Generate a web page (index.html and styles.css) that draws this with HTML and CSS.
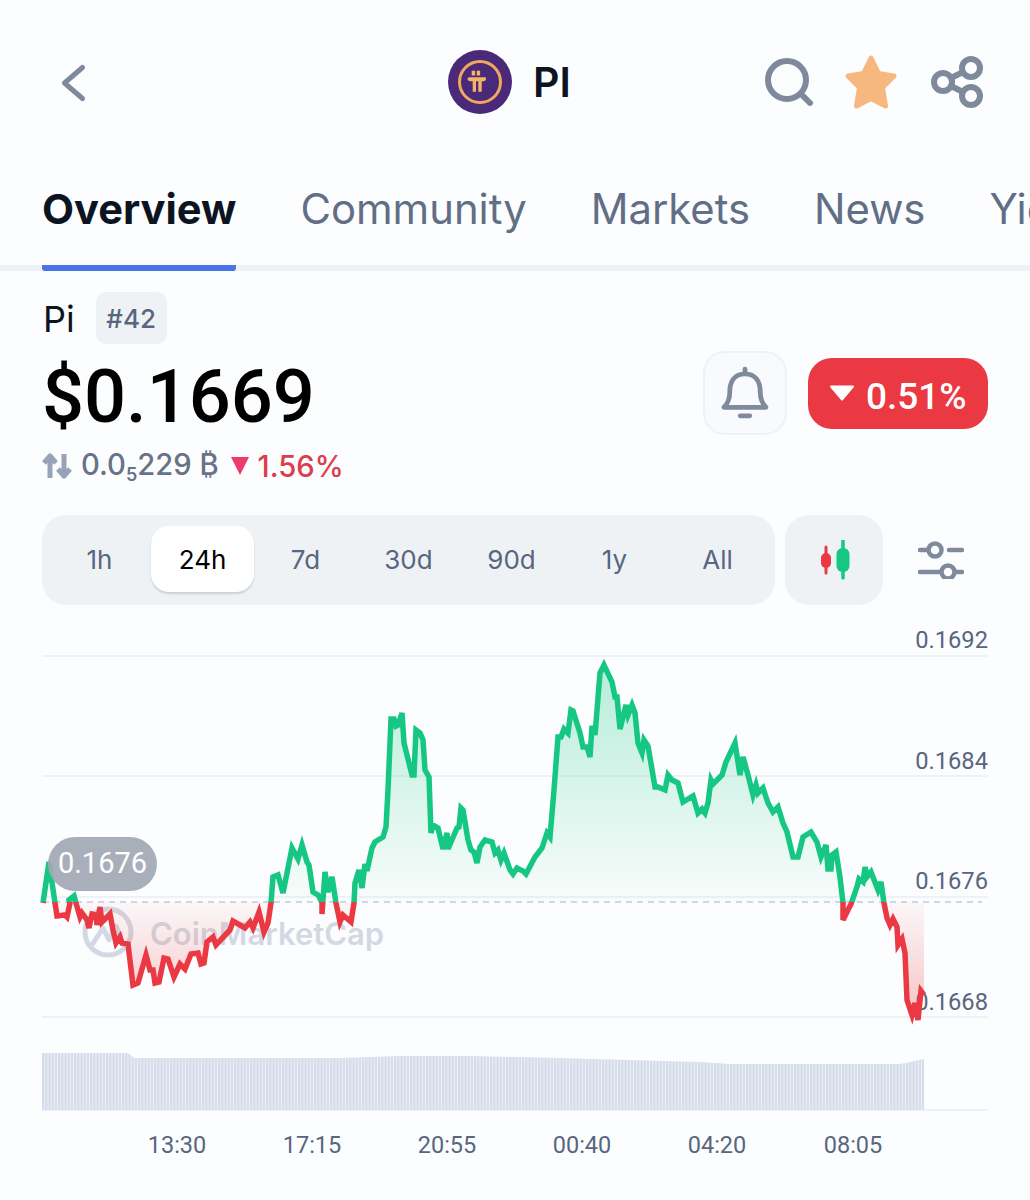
FILE: index.html
```html
<!DOCTYPE html>
<html lang="en">
<head>
<meta charset="utf-8">
<title>PI</title>
<link rel="stylesheet" href="styles.css">
</head>
<body>
<header class="topbar">
  <svg class="icon-back" viewBox="0 0 30 44" aria-hidden="true"><polyline points="22.500,7.500 4.500,23 22.500,38.500"/></svg>
  <div class="coin">
    <svg class="coin-logo" viewBox="0 0 64 64" aria-hidden="true">
      <circle class="logo-bg" cx="32" cy="32" r="32"/>
      <circle class="logo-ring" cx="32" cy="32" r="20.500"/>
      <path class="logo-pi" d="M19.500 29c0-1.200 1-1.700 2-1.700H37c1 0 1 .8 1 1.500 0 1.600-1 2.500-2.300 2.500h-2v10.400h-3.400V31.300h-2.300v10.400h-3.300V31.300h-1.400c-2 0-3.800-.6-3.800-2.300z"/>
      <rect class="logo-pi" x="23.700" y="20.700" width="3.400" height="4.800"/>
      <rect class="logo-pi" x="28.700" y="20.700" width="3.400" height="4.800"/>
    </svg>
    <span class="coin-name">PI</span>
  </div>
  <div class="actions">
    <svg class="icon-search" viewBox="0 0 50 50" aria-hidden="true"><circle cx="22" cy="23" r="19"/><line x1="36" y1="37" x2="45" y2="46"/></svg>
    <svg class="icon-star" viewBox="0 0 54 56" aria-hidden="true"><path d="M27 4l7.500 15.500 15.500 2.500-11.500 11.500 3 18.500-14.500-7.500-14.500 7.500 3-18.500L4 22l15.500-2.500z"/></svg>
    <svg class="icon-share" viewBox="0 0 54 54" aria-hidden="true"><circle cx="41" cy="13" r="9"/><circle cx="13" cy="27" r="9"/><circle cx="41" cy="41" r="9"/><line x1="21" y1="23" x2="33" y2="17"/><line x1="21" y1="31" x2="33" y2="37"/></svg>
  </div>
</header>

<nav class="tabs">
  <a class="tab tab-active">Overview</a>
  <a class="tab">Community</a>
  <a class="tab">Markets</a>
  <a class="tab">News</a>
  <a class="tab">Yield</a>
</nav>

<main class="content">
  <div class="name-row">
    <span class="name">Pi</span>
    <span class="rank">#42</span>
  </div>
  <div class="price-row">
    <span class="price">$0.1669</span>
    <div class="price-side">
      <button class="bell" type="button">
        <svg class="icon-bell" viewBox="0 0 84 84" aria-hidden="true">
          <path d="M42 22C31 22 26 30 26 41c0 8-2 12-6 16h44c-4-4-6-8-6-16 0-11-5-19-16-19z"/>
          <line x1="42" y1="17" x2="42" y2="21"/>
          <line x1="37" y1="66" x2="47" y2="66"/>
        </svg>
      </button>
      <div class="change">
        <svg class="tri-white" viewBox="0 0 26 16" aria-hidden="true"><path d="M2 1.500h22L13 14.500z"/></svg>
        <span class="change-value">0.51%</span>
      </div>
    </div>
  </div>
  <div class="btc-row">
    <svg class="icon-swap" viewBox="0 0 30 28" aria-hidden="true"><path d="M8 26V5M2 11l6-7 6 7M22 2v21M16 17l6 7 6-7"/></svg>
    <span class="btc">0.0<span class="btc-sub">5</span>229 ₿</span>
    <svg class="tri-pink" viewBox="0 0 20 20" aria-hidden="true"><path d="M1 1h18L10 19z"/></svg>
    <span class="btc-change">1.56%</span>
  </div>

  <div class="tools">
    <div class="ranges">
      <span class="range">1h</span>
      <span class="range range-active">24h</span>
      <span class="range">7d</span>
      <span class="range">30d</span>
      <span class="range">90d</span>
      <span class="range">1y</span>
      <span class="range">All</span>
    </div>
    <div class="candle-btn">
      <svg class="icon-candle" viewBox="0 0 34 40" aria-hidden="true">
        <line class="c-red" x1="6" y1="7" x2="6" y2="33"/><rect class="c-red-fill" x="1" y="13" width="10" height="15" rx="5"/>
        <line class="c-green" x1="23" y1="1" x2="23" y2="38"/><rect class="c-green-fill" x="16.500" y="8" width="13" height="24" rx="6"/>
      </svg>
    </div>
    <svg class="icon-filter" viewBox="0 0 46 40" aria-hidden="true">
      <line x1="2" y1="11" x2="8" y2="11"/><circle cx="17" cy="11" r="6.500"/><line x1="31" y1="11" x2="44" y2="11"/>
      <line x1="2" y1="33" x2="21" y2="33"/><circle cx="30" cy="33" r="6.500"/><line x1="38" y1="33" x2="44" y2="33"/>
    </svg>
  </div>

  <svg class="chart" viewBox="0 625 1030 545" role="img" aria-label="Price chart">
    <defs>
      <linearGradient id="grad-up" gradientUnits="userSpaceOnUse" x1="0" y1="665" x2="0" y2="902">
        <stop offset="0" stop-color="#16c784" stop-opacity=".3"/>
        <stop offset="1" stop-color="#16c784" stop-opacity=".02"/>
      </linearGradient>
      <linearGradient id="grad-down" gradientUnits="userSpaceOnUse" x1="0" y1="902" x2="0" y2="1020">
        <stop offset="0" stop-color="#ea3943" stop-opacity=".03"/>
        <stop offset="1" stop-color="#ea3943" stop-opacity=".3"/>
      </linearGradient>
      <clipPath id="clip-up"><rect x="0" y="600" width="1030" height="302"/></clipPath>
      <clipPath id="clip-down"><rect x="0" y="902" width="1030" height="200"/></clipPath>
      <pattern id="vol-bars" patternUnits="userSpaceOnUse" width="3.200" height="10" x="42">
        <rect class="vol-gap" width="3.200" height="10"/>
        <rect class="vol-bar" width="2.300" height="10"/>
      </pattern>
      <path id="price-line" d="M43,903L49,862L55,903L57,916L65,915L67,917L70,903L69,900L74,896L76,903L80,917L82,913L87,920L89,928L92,914L96,915L97,925L100,907L102,922L110,914L113,930L116,943L120,937L122,943L128,944L133,985L138,983L146,955L150,970L153,970L155,983L159,982L164,958L168,959L174,977L180,964L185,969L191,954L198,953L201,964L204,963L207,942L213,937L216,945L230,930L233,921L245,928L250,922L253,928L259,912L264,932L268,923L271,903L273,877L278,875L283,893L292,848L298,859L302,845L307,862L309,865L313,892L318,895L322,902L322,914L325,872L328,892L332,877L336,903L340,922L343,915L351,922L354,903L355,883L359,870L362,888L365,864L367,871L372,848L375,842L383,837L386,827L388,790L391,719L394,719L396,726L398,725L402,713L404,743L412,775L414,775L416,730L420,733L423,740L425,770L429,777L431,833L433,825L438,828L443,849L447,833L448,849L457,828L459,827L461,808L463,810L468,840L471,850L474,852L477,863L480,847L485,840L492,842L495,853L498,850L501,860L504,853L510,870L513,874L517,868L523,871L526,874L535,857L542,848L547,833L550,837L554,790L558,737L561,737L564,729L568,733L571,710L573,711L580,733L583,747L587,747L590,757L592,726L595,735L600,673L604,665L612,682L615,697L617,697L620,729L626,705L628,715L632,705L635,713L638,743L642,753L644,740L648,746L655,787L658,787L665,790L668,775L672,780L678,783L683,802L693,796L698,813L702,809L705,813L708,803L711,780L713,784L722,775L726,762L735,743L740,775L743,757L748,775L753,795L756,785L758,793L763,788L768,803L773,812L778,807L783,823L787,832L793,857L798,857L803,837L811,832L817,842L821,857L826,845L828,869L831,869L832,855L836,852L840,877L843,903L843,920L851,904L857,887L859,879L863,882L865,867L867,877L871,872L878,890L881,882L884,903L887,918L890,925L893,919L897,927L898,945L902,939L905,953L907,1000L912,1015L915,1003L918,1020L921,991L924,995"/>
      <path id="price-area" d="M43,903L49,862L55,903L57,916L65,915L67,917L70,903L69,900L74,896L76,903L80,917L82,913L87,920L89,928L92,914L96,915L97,925L100,907L102,922L110,914L113,930L116,943L120,937L122,943L128,944L133,985L138,983L146,955L150,970L153,970L155,983L159,982L164,958L168,959L174,977L180,964L185,969L191,954L198,953L201,964L204,963L207,942L213,937L216,945L230,930L233,921L245,928L250,922L253,928L259,912L264,932L268,923L271,903L273,877L278,875L283,893L292,848L298,859L302,845L307,862L309,865L313,892L318,895L322,902L322,914L325,872L328,892L332,877L336,903L340,922L343,915L351,922L354,903L355,883L359,870L362,888L365,864L367,871L372,848L375,842L383,837L386,827L388,790L391,719L394,719L396,726L398,725L402,713L404,743L412,775L414,775L416,730L420,733L423,740L425,770L429,777L431,833L433,825L438,828L443,849L447,833L448,849L457,828L459,827L461,808L463,810L468,840L471,850L474,852L477,863L480,847L485,840L492,842L495,853L498,850L501,860L504,853L510,870L513,874L517,868L523,871L526,874L535,857L542,848L547,833L550,837L554,790L558,737L561,737L564,729L568,733L571,710L573,711L580,733L583,747L587,747L590,757L592,726L595,735L600,673L604,665L612,682L615,697L617,697L620,729L626,705L628,715L632,705L635,713L638,743L642,753L644,740L648,746L655,787L658,787L665,790L668,775L672,780L678,783L683,802L693,796L698,813L702,809L705,813L708,803L711,780L713,784L722,775L726,762L735,743L740,775L743,757L748,775L753,795L756,785L758,793L763,788L768,803L773,812L778,807L783,823L787,832L793,857L798,857L803,837L811,832L817,842L821,857L826,845L828,869L831,869L832,855L836,852L840,877L843,903L843,920L851,904L857,887L859,879L863,882L865,867L867,877L871,872L878,890L881,882L884,903L887,918L890,925L893,919L897,927L898,945L902,939L905,953L907,1000L912,1015L915,1003L918,1020L921,991L924,995L924,902L43,902Z"/>
    </defs>

    <line class="grid" x1="42" y1="656" x2="988" y2="656"/>
    <line class="grid" x1="42" y1="776" x2="988" y2="776"/>
    <line class="grid" x1="42" y1="897" x2="988" y2="897"/>
    <line class="grid" x1="42" y1="1017" x2="988" y2="1017"/>
    <line class="grid" x1="42" y1="1110" x2="988" y2="1110"/>

    <g class="watermark">
      <circle class="wm-ring" cx="108" cy="932" r="23"/>
      <path class="wm-mark" d="M92 945l11-17 6 12 7-14 5 12"/>
      <text class="wm-text" x="150" y="945">CoinMarketCap</text>
    </g>

    <use href="#price-area" class="area-up" clip-path="url(#clip-up)"/>
    <use href="#price-area" class="area-down" clip-path="url(#clip-down)"/>
    <line class="base" x1="43" y1="902" x2="982" y2="902"/>

    <text class="y-label" x="988" y="648">0.1692</text>
    <text class="y-label" x="988" y="769">0.1684</text>
    <text class="y-label" x="988" y="889">0.1676</text>
    <text class="y-label" x="988" y="1010">0.1668</text>

    <use href="#price-line" class="line-up" clip-path="url(#clip-up)"/>
    <use href="#price-line" class="line-down" clip-path="url(#clip-down)"/>

    <rect class="bubble" x="48" y="837" width="109" height="54" rx="27"/>
    <text class="bubble-text" x="102.500" y="873">0.1676</text>

    <path fill="url(#vol-bars)" d="M42 1053H128L134 1058H340L400 1056H470L560 1058L700 1062L730 1064H900L924 1059V1110H42Z"/>

    <text class="x-label" x="177" y="1153">13:30</text>
    <text class="x-label" x="312" y="1153">17:15</text>
    <text class="x-label" x="447" y="1153">20:55</text>
    <text class="x-label" x="582" y="1153">00:40</text>
    <text class="x-label" x="717" y="1153">04:20</text>
    <text class="x-label" x="853" y="1153">08:05</text>
  </svg>
</main>
</body>
</html>
```
FILE: styles.css
```css
* { box-sizing: border-box; }
html, body { margin: 0; height: 1200px; overflow: hidden; }
body {
  background: #fcfdfe;
  font-family: Inter, "Noto Sans", sans-serif;
  color: #0d1421;
}

/* top bar */
.topbar {
  display: grid;
  grid-template-columns: 388px auto 1fr;
  align-items: center;
  height: 64px;
  margin-top: 50px;
  padding: 0 46px 0 60px;
}
.icon-back { width: 30px; height: 44px; }
.icon-back polyline { fill: none; stroke: #7e8a9c; stroke-width: 5; stroke-linecap: round; stroke-linejoin: round; }
.coin { display: flex; align-items: center; gap: 21px; }
.coin-logo { width: 64px; height: 64px; }
.logo-bg { fill: #4a2a78; }
.logo-ring { fill: none; stroke: #efa95f; stroke-width: 3; }
.logo-pi { fill: #f4b368; }
.coin-name { font-size: 41px; font-weight: 600; }
.actions { display: flex; align-items: center; justify-content: flex-end; gap: 29px; }
.icon-search { width: 50px; height: 50px; }
.icon-search circle, .icon-search line { fill: none; stroke: #7e8a9c; stroke-width: 6; stroke-linecap: round; }
.icon-star { width: 54px; height: 56px; }
.icon-star path { fill: #f6b87e; stroke: #f6b87e; stroke-width: 5; stroke-linejoin: round; }
.icon-share { width: 54px; height: 54px; margin-left: 3px; }
.icon-share circle, .icon-share line { fill: none; stroke: #7e8a9c; stroke-width: 6; }

/* tabs */
.tabs {
  display: flex;
  gap: 64px;
  margin-top: 64px;
  height: 93px;
  padding-left: 42px;
  border-bottom: 6px solid #eff2f5;
  white-space: nowrap;
}
.tab {
  flex: none;
  height: 93px;
  padding-top: 1px;
  line-height: 60px;
  font-size: 41.800px;
  color: #616e85;
}
.tab:last-child { flex: 0 1 auto; min-width: 0; overflow: hidden; }
.tab-active {
  color: #0d1421;
  font-size: 41.600px;
  font-weight: 700;
  border-bottom: 6px solid #4a74e8;
  border-radius: 0 0 3px 3px;
}

/* summary */
.content { padding: 21px 42px 0; }
.name-row { display: flex; align-items: center; gap: 21px; height: 52px; }
.name { font-size: 36px; padding-left: 1px; padding-top: 2px; }
.rank {
  display: flex;
  align-items: center;
  justify-content: center;
  width: 71px;
  height: 52px;
  border-radius: 10px;
  background: #eff2f5;
  color: #58667e;
  font-size: 26px;
  font-weight: 500;
}
.price-row { display: flex; align-items: center; justify-content: space-between; height: 84px; margin-top: 7px; }
.price { font-family: Roboto, sans-serif; font-size: 74px; font-weight: 500; color: #000; padding-top: 7px; }
.price-side { display: flex; align-items: center; gap: 21px; }
.bell { width: 84px; height: 84px; padding: 0; background: #f9fafd; border: 2px solid #eff2f5; border-radius: 22px; }
.icon-bell { display: block; width: 80px; height: 80px; }
.icon-bell path, .icon-bell line { fill: none; stroke: #808a9d; stroke-width: 5; stroke-linecap: round; stroke-linejoin: round; }
.change {
  display: flex;
  align-items: center;
  gap: 11px;
  width: 180px;
  height: 71px;
  padding-left: 21px;
  border-radius: 24px;
  background: #ea3943;
  color: #fff;
  font-family: Roboto, sans-serif;
  font-size: 37px;
  font-weight: 500;
}
.change-value { padding-top: 6px; }
.tri-white { width: 26px; height: 16px; }
.tri-white path { fill: #fff; stroke: #fff; stroke-width: 2; stroke-linejoin: round; }
.btc-row { display: flex; align-items: center; height: 36px; margin-top: 13px; font-size: 29.200px; font-weight: 500; }
.icon-swap { width: 30px; height: 28px; }
.icon-swap path { fill: none; stroke: #97a3b6; stroke-width: 5; stroke-linejoin: round; }
.btc { margin-left: 9px; color: #667388; }
.btc-sub { font-size: 18px; font-weight: 600; vertical-align: -6px; }
.tri-pink { width: 20px; height: 20px; margin-left: 11px; }
.tri-pink path { fill: #ee3a6a; }
.btc-change { margin-left: 8px; color: #dc3c4c; }

/* range selector */
.tools { display: flex; align-items: center; margin-top: 31px; }
.ranges {
  display: flex;
  align-items: center;
  width: 733px;
  height: 90px;
  padding: 0 6px 2px;
  border-radius: 24px;
  background: #eff2f5;
}
.range {
  flex: 1;
  height: 66px;
  line-height: 68px;
  text-align: center;
  font-size: 26px;
  color: #58667e;
}
.range-active {
  background: #fff;
  border-radius: 18px;
  color: #000;
  box-shadow: 0 2px 2px rgba(88, 102, 126, .25);
}
.candle-btn {
  display: flex;
  align-items: center;
  justify-content: center;
  width: 98px;
  height: 90px;
  margin-left: 10px;
  padding-left: 6px;
  border-radius: 24px;
  background: #eff2f5;
}
.icon-candle { width: 34px; height: 40px; }
.c-red { stroke: #ea3943; stroke-width: 3; stroke-linecap: round; }
.c-red-fill { fill: #ea3943; }
.c-green { stroke: #16c784; stroke-width: 3.500; stroke-linecap: round; }
.c-green-fill { fill: #16c784; }
.icon-filter { width: 46px; height: 40px; margin: -2px 0 0 35px; }
.icon-filter line, .icon-filter circle { fill: none; stroke: #808a9d; stroke-width: 4.500; stroke-linecap: round; }

/* chart */
.chart { display: block; width: 1030px; height: 545px; margin: 20px 0 0 -42px; }
.grid { stroke: #eff2f5; stroke-width: 2; }
.base { stroke: #cfd6e4; stroke-width: 2; stroke-dasharray: 6 5; }
.area-up { fill: url(#grad-up); }
.area-down { fill: url(#grad-down); }
.line-up, .line-down { fill: none; stroke-width: 5.500; stroke-linejoin: miter; stroke-miterlimit: 4; }
.line-up { stroke: #16c784; }
.line-down { stroke: #ea3943; }
.wm-ring, .wm-mark { fill: none; stroke: #d3d9e3; stroke-width: 5; }
.wm-mark { stroke-linejoin: round; }
.wm-text { fill: #d3d9e3; font-family: Inter, sans-serif; font-size: 31px; font-weight: 600; }
.bubble { fill: #a3a9b5; fill-opacity: .93; }
.bubble-text { fill: #fff; font-family: Roboto, sans-serif; font-size: 29px; text-anchor: middle; }
.y-label { fill: #58667e; font-family: Roboto, sans-serif; font-size: 23.700px; text-anchor: end; }
.x-label { fill: #58667e; font-family: Roboto, sans-serif; font-size: 23.500px; text-anchor: middle; }
.vol-bar { fill: #d5dcea; }
.vol-gap { fill: #f0f2f7; }
```
